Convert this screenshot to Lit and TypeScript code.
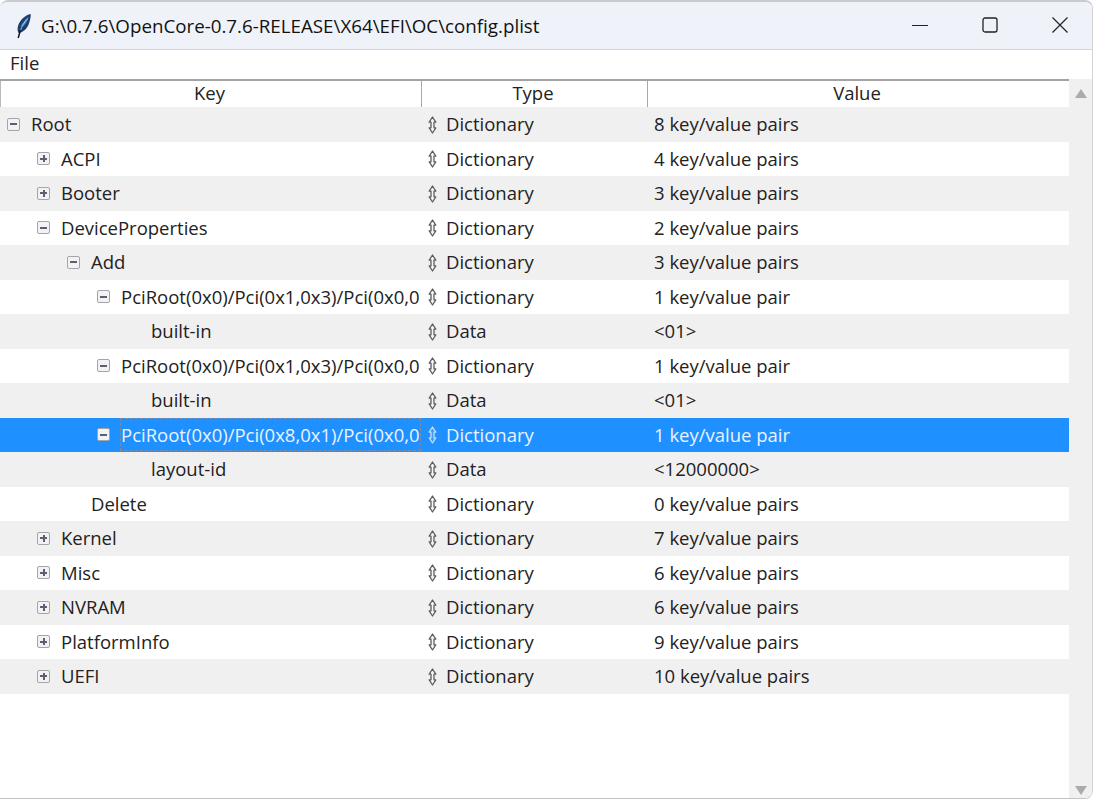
import { LitElement, html, css, svg } from "lit";
import { customElement } from "lit/decorators.js";

type Row = {
  key: string;
  level: number;
  open?: boolean;
  type: string;
  value: string;
  selected?: boolean;
};

const PCI1 = "PciRoot(0x0)/Pci(0x1,0x3)/Pci(0x0,0";

const rows: Row[] = [
  { key: "Root", level: 0, open: true, type: "Dictionary", value: "8 key/value pairs" },
  { key: "ACPI", level: 1, open: false, type: "Dictionary", value: "4 key/value pairs" },
  { key: "Booter", level: 1, open: false, type: "Dictionary", value: "3 key/value pairs" },
  { key: "DeviceProperties", level: 1, open: true, type: "Dictionary", value: "2 key/value pairs" },
  { key: "Add", level: 2, open: true, type: "Dictionary", value: "3 key/value pairs" },
  { key: PCI1, level: 3, open: true, type: "Dictionary", value: "1 key/value pair" },
  { key: "built-in", level: 4, type: "Data", value: "<01>" },
  { key: PCI1, level: 3, open: true, type: "Dictionary", value: "1 key/value pair" },
  { key: "built-in", level: 4, type: "Data", value: "<01>" },
  { key: "PciRoot(0x0)/Pci(0x8,0x1)/Pci(0x0,0", level: 3, open: true, type: "Dictionary", value: "1 key/value pair", selected: true },
  { key: "layout-id", level: 4, type: "Data", value: "<12000000>" },
  { key: "Delete", level: 2, type: "Dictionary", value: "0 key/value pairs" },
  { key: "Kernel", level: 1, open: false, type: "Dictionary", value: "7 key/value pairs" },
  { key: "Misc", level: 1, open: false, type: "Dictionary", value: "6 key/value pairs" },
  { key: "NVRAM", level: 1, open: false, type: "Dictionary", value: "6 key/value pairs" },
  { key: "PlatformInfo", level: 1, open: false, type: "Dictionary", value: "9 key/value pairs" },
  { key: "UEFI", level: 1, open: false, type: "Dictionary", value: "10 key/value pairs" },
];

const feather = svg`<svg width="18" height="26" viewBox="0 0 18 26">
  <path d="M15.800 1C10.500 2 5.500 6.500 3.500 11.500 2.300 14.500 2.200 17.500 3.500 20 8.500 19.500 12 15.500 13.800 11 15 7.800 15.800 4.500 15.800 1z" fill="#1d3f6e"/>
  <path d="M13.500 4C10 6.500 7 10 5.500 13.500 6.500 14 9 13 11 10 12.500 8 13.200 6 13.500 4z" fill="#3f86c8"/>
  <path d="M12.500 5.500C9.500 9 7 13 5.200 18" stroke="#bcd7ef" stroke-width="0.800" fill="none"/>
  <path d="M5.500 17 3.200 25" stroke="#141b24" stroke-width="1.500" fill="none"/>
</svg>`;

const updown = svg`<svg class="updown" width="11" height="18" viewBox="0 0 11 18">
  <path d="M5.500 1 8.800 6.200H7V11.800H8.800L5.500 17 2.200 11.800H4V6.200H2.200z" stroke-width="1.300" stroke-linejoin="round"/>
</svg>`;

@customElement("app-root")
export class AppRoot extends LitElement {
  static styles = css`
    :host {
      display: flex;
      flex-direction: column;
      height: 799px;
      width: 1093px;
      overflow: hidden;
      box-sizing: border-box;
      background: #fff;
      font-family: "Open Sans", "Noto Sans", sans-serif;
      font-size: 18.500px;
      color: #222;
      border-top: 2px solid #c9cbce;
      border-right: 1px solid #d4d4d6;
      border-bottom: 1px solid #c4c4c6;
      border-radius: 8px 8px 8px 0;
    }
    .title {
      height: 47px;
      flex: none;
      display: flex;
      align-items: center;
      background: #eff3f9;
      border-bottom: 1px solid #d6d7d9;
      color: #111;
    }
    .feather {
      margin-left: 15px;
      width: 18px;
      height: 26px;
      margin-right: 8px;
    }
    .path {
      flex: 1;
      font-size: 18.750px;
    }
    .ctl {
      width: 70px;
      display: flex;
      justify-content: center;
      padding-bottom: 2px;
    }
    .ctl:last-child {
      margin-right: -2.500px;
    }
    .menu {
      height: 29px;
      flex: none;
      display: flex;
      align-items: center;
      padding: 0 0 5px 10px;
      box-sizing: border-box;
    }
    .main {
      flex: 1;
      display: flex;
      min-height: 0;
    }
    .content {
      width: 1069px;
      flex: none;
    }
    .head {
      display: grid;
      grid-template-columns: 421px 226px 1fr;
      height: 28px;
      border-top: 2px solid #a3a3a3;
      box-sizing: border-box;
    }
    .head div {
      text-align: center;
      line-height: 24px;
      padding-right: 3px;
      border-left: 1.500px solid #a8a8a8;
    }
    .head div:first-child {
      border-left: 1px solid #bbb;
    }
    .row {
      display: grid;
      grid-template-columns: 421px 226px 1fr;
      height: 34.500px;
      align-items: center;
      background: #fff;
    }
    .row.odd {
      background: #f1f0f0;
    }
    .row.sel {
      background: #1e90ff;
      color: #eaf3ff;
    }
    .key {
      display: flex;
      align-items: center;
      white-space: nowrap;
      height: 100%;
      min-width: 0;
    }
    .label {
      margin-bottom: 1.500px;
    }
    .box {
      flex: none;
      width: 13px;
      height: 13px;
      margin-right: 11px;
      box-sizing: border-box;
      border: 1px solid #a3a5aa;
      border-radius: 2px;
      background: #f2f2f4;
      position: relative;
    }
    .box.none {
      visibility: hidden;
    }
    .box::before {
      content: "";
      position: absolute;
      left: 2px;
      right: 2px;
      top: 4.500px;
      height: 2px;
      background: #5a6070;
    }
    .box.plus::after {
      content: "";
      position: absolute;
      top: 2px;
      bottom: 2px;
      left: 4.500px;
      width: 2px;
      background: #5a6070;
    }
    .focus {
      outline: 1px dashed #7d8aa0;
      padding: 3px 0;
      margin-bottom: 1.500px;
    }
    .type {
      display: flex;
      align-items: center;
      padding-left: 6px;
      gap: 8px;
    }
    .updown {
      flex: none;
      fill: #f6f6f6;
      stroke: #5c5e62;
      margin-top: 1px;
    }
    .sel .updown {
      fill: #3a9cff;
      stroke: #c4dcf5;
    }
    .value {
      padding-left: 7px;
      margin-bottom: 1.500px;
    }
    .bar {
      flex: 1;
      background: #f0f0f1;
      display: flex;
      flex-direction: column;
      justify-content: space-between;
      align-items: center;
      padding: 10px 0 3px;
    }
    .arrow {
      width: 0;
      height: 0;
      border-left: 6px solid transparent;
      border-right: 6px solid transparent;
    }
    .arrow.up {
      border-bottom: 9px solid #aaabad;
    }
    .arrow.down {
      border-top: 9px solid #aaabad;
    }
  `;

  renderRow(r: Row, i: number) {
    const boxClass = r.open === undefined ? "box none" : r.open ? "box" : "box plus";
    return html`<div class="row ${i % 2 === 0 ? "odd" : ""} ${r.selected ? "sel" : ""}">
      <div class="key" style="padding-left:${7 + r.level * 30}px">
        <span class=${boxClass}></span>
        <span class=${r.selected ? "focus" : "label"}>${r.key}</span>
      </div>
      <div class="type">${updown}<span class="label">${r.type}</span></div>
      <div class="value">${r.value}</div>
    </div>`;
  }

  render() {
    return html`
      <div class="title">
        <div class="feather">${feather}</div>
        <div class="path">G:\\0.7.6\\OpenCore-0.7.6-RELEASE\\X64\\EFI\\OC\\config.plist</div>
        <div class="ctl">
          <svg width="16" height="16" viewBox="0 0 16 16"><path d="M0 8.500H16" stroke="#222" stroke-width="1.200"/></svg>
        </div>
        <div class="ctl">
          <svg width="16" height="16" viewBox="0 0 16 16"><rect x="1" y="1" width="14" height="14" rx="2" fill="none" stroke="#222" stroke-width="1.300"/></svg>
        </div>
        <div class="ctl">
          <svg width="16" height="16" viewBox="0 0 16 16"><path d="M.5.500 15.500 15.500M15.500.500 .5 15.500" stroke="#222" stroke-width="1.200"/></svg>
        </div>
      </div>
      <div class="menu">File</div>
      <div class="main">
        <div class="content">
          <div class="head"><div>Key</div><div>Type</div><div>Value</div></div>
          ${rows.map((r, i) => this.renderRow(r, i))}
        </div>
        <div class="bar">
          <span class="arrow up"></span>
          <span class="arrow down"></span>
        </div>
      </div>
    `;
  }
}
